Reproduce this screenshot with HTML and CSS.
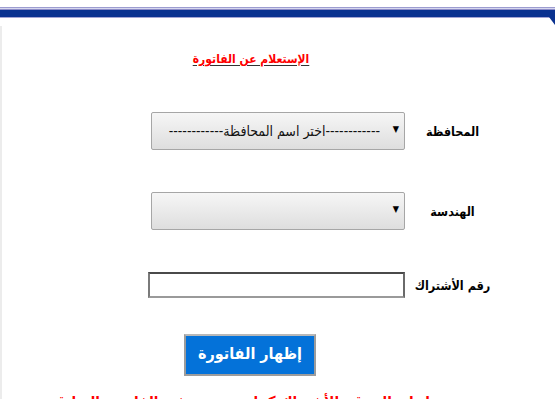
FILE: index.html
```html
<!DOCTYPE html>
<html lang="ar">
<head>
<meta charset="utf-8">
<title>الإستعلام عن الفاتورة</title>
<link rel="stylesheet" href="styles.css">
</head>
<body>
<div class="topbar"><div class="corner"></div></div>
<div class="panel" dir="rtl">
  <div class="title"><span>الإستعلام عن الفاتورة</span></div>
  <div class="form">
    <div class="label">المحافظة</div>
    <div class="selwrap"><select class="sel"><option>------------اختر اسم المحافظة------------</option></select></div>
    <div class="label">الهندسة</div>
    <div class="selwrap"><select class="sel"><option></option></select></div>
    <div class="label">رقم الأشتراك</div>
    <div class="inwrap"><input class="txt" type="text"></div>
  </div>
  <div class="btnrow"><button class="btn">إظهار الفاتورة</button></div>
  <p class="note">برجاء إدخال رقم الأشتراك كما هو مدون في الفاتورة السابقة</p>
</div>
</body>
</html>
```
FILE: styles.css
```css
html, body {
  margin: 0;
  padding: 0;
  background: #fff;
  overflow: hidden;
}
body {
  font-family: "DejaVu Sans Condensed", "DejaVu Sans", sans-serif;
  width: 555px;
  height: 400px;
}
.topbar {
  position: relative;
  margin-top: 7px;
  height: 9px;
  border-top: 1px solid #9c9cd0;
  border-bottom: 1px solid #a4a4d4;
  background: #0a3290;
  box-shadow: inset 0 1px 0 #d6d6ee, inset 0 2px 0 #8c8cc8;
}
.corner {
  position: absolute;
  right: 0;
  top: 9px;
  width: 6px;
  height: 8px;
  background: #0a3290;
  clip-path: polygon(0 0, 100% 0, 100% 100%);
}
.panel {
  border-left: 2px solid #ececec;
  margin-top: 8px;
  padding-right: 55px;
  height: 373px;
  box-sizing: border-box;
  overflow: hidden;
}
.title {
  display: flex;
  justify-content: center;
  padding-top: 23px;
  height: 20px;
  line-height: 20px;
}
.title span {
  color: #ff0000;
  font-weight: bold;
  font-size: 12px;
  text-decoration: underline;
  text-decoration-color: #333;
  text-underline-offset: 2px;
}
.form {
  display: grid;
  grid-template-columns: 95px 257px;
  grid-template-rows: 38px 38px 26px;
  row-gap: 42px;
  margin-top: 43px;
  align-items: center;
}
.label {
  text-align: center;
  font-weight: bold;
  font-size: 12.5px;
  color: #000;
  margin-top: 1px;
}
.selwrap {
  position: relative;
  height: 38px;
  padding-left: 3px;
}
.selwrap::after {
  content: "\25BC";
  position: absolute;
  right: 6px;
  top: 12px;
  font-size: 9px;
  color: #000;
  pointer-events: none;
}
.sel {
  -webkit-appearance: none;
  appearance: none;
  width: 254px;
  height: 38px;
  box-sizing: border-box;
  border: 1px solid #a6a6a6;
  border-radius: 2px;
  background: linear-gradient(#f6f6f6, #dedede);
  font-family: "DejaVu Sans Condensed", "DejaVu Sans", sans-serif;
  font-size: 14px;
  color: #111;
  direction: rtl;
  padding: 0 24px 0 2px;
  margin: 0;
}
.inwrap {
  height: 26px;
}
.txt {
  width: 257px;
  height: 26px;
  box-sizing: border-box;
  border: 2px solid #7a7a7a;
  border-top-color: #4a4a4a;
  border-right-color: #6a6a6a;
  border-bottom-color: #9a9a9a;
  background: #fff;
  margin: 0;
  padding: 0;
}
.btnrow {
  display: flex;
  justify-content: center;
  margin-top: 36px;
}
.btn {
  width: 132px;
  height: 42px;
  box-sizing: border-box;
  background: #0472d9;
  border: 2px solid #9c9c9c;
  border-top-color: #b8b8b8;
  color: #fff;
  font-family: "DejaVu Sans Condensed", "DejaVu Sans", sans-serif;
  font-size: 16px;
  font-weight: bold;
  padding: 0 0 4px;
  margin: 0 2px 0 0;
}
.note {
  margin: 17px 0 0;
  text-align: center;
  color: #ff0000;
  font-weight: bold;
  font-size: 15px;
  white-space: nowrap;
}
```
